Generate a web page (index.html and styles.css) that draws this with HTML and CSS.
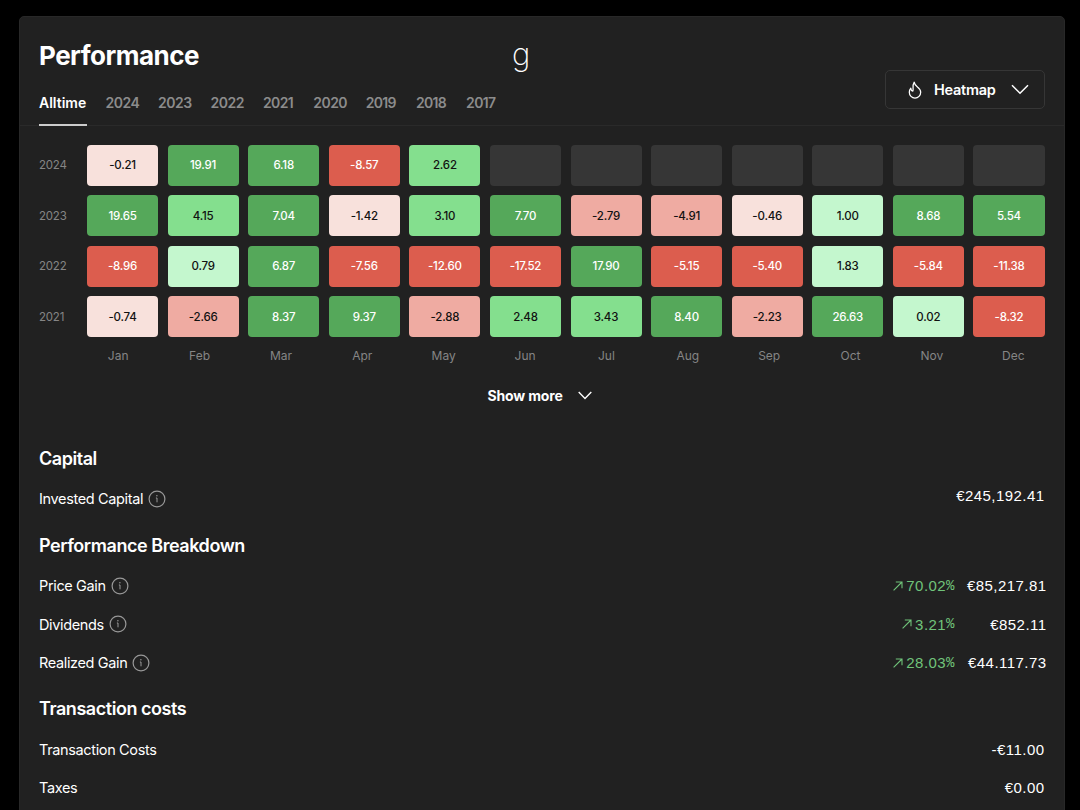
FILE: index.html
```
<!DOCTYPE html>
<html lang="en">
<head>
<meta charset="utf-8">
<title>Performance</title>
<link rel="stylesheet" href="styles.css">
</head>
<body>
<svg class="defs" width="0" height="0">
  <symbol id="info" viewBox="0 0 18 18"><circle cx="9" cy="9" r="7.9" fill="none" stroke="currentColor" stroke-width="1.2"/><path d="M9 8v4.3M7.9 8H9" fill="none" stroke="currentColor" stroke-width="1"/><circle cx="8.9" cy="5.7" r=".75" fill="currentColor"/></symbol>
  <symbol id="arrow" viewBox="0 0 10 10"><path d="M.6 9.4 9 1M2.8 1H9v6.2" fill="none" stroke="currentColor" stroke-width="1.1"/></symbol>
</svg>
<main class="card">
  <header class="header">
    <div class="heading">
      <h1 class="title">Performance</h1>
      <span class="mark">g</span>
    </div>
    <nav class="tabs">
      <a class="tab active">Alltime</a><a class="tab">2024</a><a class="tab">2023</a><a class="tab">2022</a><a class="tab slim">2021</a><a class="tab">2020</a><a class="tab slim">2019</a><a class="tab slim">2018</a><a class="tab slim">2017</a>
    </nav>
    <button class="select">
      <svg class="flame" viewBox="0 0 14 18"><path d="M6.200 1.200c.3 2.300 1.500 3.400 3 4.600 1.900 1.500 3.500 3 3.500 5.500a5.700 5.700 0 0 1-11.400 0c0-1.700.6-3 1.500-4.100.1 1.600.8 2.600 2 2.900C6 8.500 3.700 5.200 6.200 1.200Z" fill="none" stroke="currentColor" stroke-width="1.250" stroke-linejoin="round"/></svg>
      <span>Heatmap</span>
      <svg class="chev" viewBox="0 0 18 11"><path d="M1 1.200 9 9.300 17 1.200" fill="none" stroke="currentColor" stroke-width="1.500"/></svg>
    </button>
  </header>

  <section class="heatmap">
    <div class="year">2024</div><div class="c pale">-0.21</div><div class="c green">19.91</div><div class="c green">6.18</div><div class="c red">-8.57</div><div class="c light">2.62</div><div class="c"></div><div class="c"></div><div class="c"></div><div class="c"></div><div class="c"></div><div class="c"></div><div class="c"></div>
    <div class="year">2023</div><div class="c green">19.65</div><div class="c light">4.15</div><div class="c green">7.04</div><div class="c pale">-1.42</div><div class="c light">3.10</div><div class="c green">7.70</div><div class="c pink">-2.79</div><div class="c pink">-4.91</div><div class="c pale">-0.46</div><div class="c mint">1.00</div><div class="c green">8.68</div><div class="c green">5.54</div>
    <div class="year">2022</div><div class="c red">-8.96</div><div class="c mint">0.79</div><div class="c green">6.87</div><div class="c red">-7.56</div><div class="c red">-12.60</div><div class="c red">-17.52</div><div class="c green">17.90</div><div class="c red">-5.15</div><div class="c red">-5.40</div><div class="c mint">1.83</div><div class="c red">-5.84</div><div class="c red">-11.38</div>
    <div class="year">2021</div><div class="c pale">-0.74</div><div class="c pink">-2.66</div><div class="c green">8.37</div><div class="c green">9.37</div><div class="c pink">-2.88</div><div class="c light">2.48</div><div class="c light">3.43</div><div class="c green">8.40</div><div class="c pink">-2.23</div><div class="c green">26.63</div><div class="c mint">0.02</div><div class="c red">-8.32</div>
  </section>
  <div class="months"><span>Jan</span><span>Feb</span><span>Mar</span><span>Apr</span><span>May</span><span>Jun</span><span>Jul</span><span>Aug</span><span>Sep</span><span>Oct</span><span>Nov</span><span>Dec</span></div>
  <button class="more"><span>Show more</span><svg viewBox="0 0 14 9"><path d="M.7 1 7 7.400 13.300 1" fill="none" stroke="currentColor" stroke-width="1.400"/></svg></button>

  <section class="group">
    <h2 class="sub">Capital</h2>
    <div class="row"><span class="label">Invested Capital</span><svg class="info"><use href="#info"/></svg><span class="value raised">€245,192.41</span></div>
  </section>
  <section class="group">
    <h2 class="sub">Performance Breakdown</h2>
    <div class="row gain"><span class="label">Price Gain</span><svg class="info"><use href="#info"/></svg><span class="pct"><svg class="arrow"><use href="#arrow"/></svg>70.02<span class="sign">%</span></span><span class="value">€85,217.81</span></div>
    <div class="row gain"><span class="label">Dividends</span><svg class="info"><use href="#info"/></svg><span class="pct"><svg class="arrow"><use href="#arrow"/></svg>3.21<span class="sign">%</span></span><span class="value">€852.11</span></div>
    <div class="row gain"><span class="label">Realized Gain</span><svg class="info"><use href="#info"/></svg><span class="pct"><svg class="arrow"><use href="#arrow"/></svg>28.03<span class="sign">%</span></span><span class="value">€44.117.73</span></div>
  </section>
  <section class="group costs">
    <h2 class="sub">Transaction costs</h2>
    <div class="row"><span class="label">Transaction Costs</span><span class="value">-€11.00</span></div>
    <div class="row"><span class="label">Taxes</span><span class="value">€0.00</span></div>
  </section>
</main>
</body>
</html>
```
FILE: styles.css
```
* { box-sizing: border-box; }
body { margin: 0; height: 810px; overflow: hidden; background: #000; color: #fff; font-family: Inter, "Liberation Sans", sans-serif; padding: 16px 15px 0 19px; }
.defs { position: absolute; }
button { background: none; border: 0; color: inherit; font: inherit; padding: 0; }
svg { display: block; flex: none; }
.card { height: 820px; background: #212121; border: 1px solid #282828; border-radius: 5px 5px 0 0; padding: 0 19.500px 0 19px; }
.header { position: relative; height: 109px; margin: 0 -19.500px 0 -19px; padding: 0 19.500px 0 19px; border-bottom: 1px solid #2a2a2a; }
.heading { display: flex; height: 63px; padding-top: 21.500px; }
.title { margin: 0; width: 473px; font-size: 26px; font-weight: 650; line-height: 34px; letter-spacing: -.5px; }
.mark { font-size: 31px; font-weight: 250; line-height: 30px; }
.tabs { display: flex; gap: 19px; height: 46px; font-size: 14px; font-weight: 600; color: #8c8c8c; }
.tab { width: 33.500px; height: 46px; line-height: 46px; letter-spacing: -.5px; }
.tab.slim { width: 31.200px; letter-spacing: -.65px; }
.tab.active { width: 47.500px; color: #fff; border-bottom: 2px solid #ccc; letter-spacing: 0; }
.select { position: absolute; right: 19.500px; top: 53px; width: 160px; height: 39px; border: 1.500px solid #363636; border-radius: 5px; display: flex; align-items: center; padding-left: 22px; font-size: 14.500px; font-weight: 600; letter-spacing: -.25px; }
.flame { width: 14px; height: 18px; margin-right: 12.500px; }
.chev { width: 18px; height: 11px; margin-left: 15px; }
.heatmap { display: grid; grid-template-columns: 38.500px repeat(12, 1fr); grid-auto-rows: 40.800px; gap: 9.600px 9.500px; padding-top: 19px; }
.year { align-self: center; font-size: 11.500px; letter-spacing: -.2px; color: #858585; }
.c { display: flex; align-items: center; justify-content: center; background: #363636; border-radius: 4px; font-size: 11.500px; font-weight: 500; letter-spacing: -.2px; }
.green { background: #55a85a; }
.light { background: #84df8e; color: #111; }
.mint { background: #c4f7ce; color: #111; }
.red { background: #dc5d4e; }
.pink { background: #efaba2; color: #111; }
.pale { background: #f8e1dc; color: #111; }
.months { display: flex; height: 38px; margin: 0 -9.500px 0 38.500px; align-items: center; font-size: 12px; color: #858585; }
.months span { flex: 1; text-align: center; }
.more { display: flex; align-items: center; height: 41.700px; margin-left: 448.500px; font-size: 14px; font-weight: 650; letter-spacing: -.15px; }
.more svg { width: 14px; height: 9px; margin-left: 15px; }
.group { height: 87px; }
.group + .group { height: auto; }
.more + .group { margin-top: 20px; }
.group.costs { margin-top: 5px; }
.sub { margin: 0; height: 43px; line-height: 44px; font-size: 18px; font-weight: 600; letter-spacing: -.45px; }
.row { display: flex; align-items: center; height: 38.400px; font-size: 14.500px; }
.label { letter-spacing: -.36px; }
.info { width: 18px; height: 18px; margin-left: 5px; color: #999; }
.value { margin-left: auto; font-family: "Liberation Sans", sans-serif; font-size: 15px; letter-spacing: .45px; }
.raised { margin-bottom: 6px; }
.gain .value { margin-left: 0; width: 92px; margin-right: -2px; text-align: right; }
.pct { display: flex; align-items: center; margin-left: auto; color: #70c37a; font-family: "Liberation Sans", sans-serif; font-size: 15px; letter-spacing: .45px; }
.sign { font-family: "Liberation Mono", monospace; font-size: 14px; letter-spacing: 0; }
.arrow { width: 10px; height: 10px; margin-right: 3px; }
```
